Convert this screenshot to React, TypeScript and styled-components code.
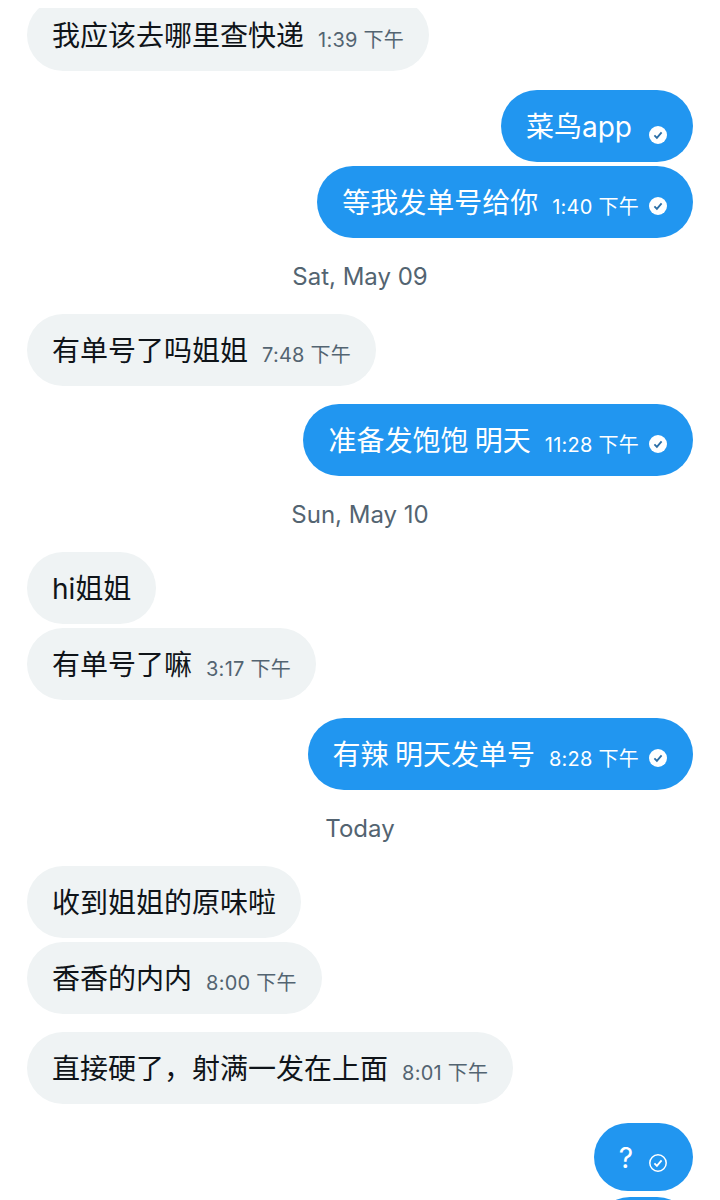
import React from "react";
import styled, { createGlobalStyle } from "styled-components";

const textStack = `Inter, "Noto Sans CJK SC", sans-serif`;

const Global = createGlobalStyle`
  html, body { margin: 0; padding: 0; background: #fff; }
  body { font-family: ${textStack}; }
`;

const Screen = styled.main`
  width: 720px;
  height: 1200px;
  overflow: hidden;
  box-sizing: border-box;
  padding: 8px 27px 0;
  background: #fff;
`;

/* The list is scrolled, so its first bubble runs under the top edge. */
const Viewport = styled.div`
  height: 1192px;
  overflow: hidden;
`;

const Thread = styled.div`
  display: flex;
  flex-direction: column;
  margin-top: -9px;
`;

const Bubble = styled.div<{ $mine?: boolean; $gap: number; $short?: boolean; $minWidth?: number }>`
  align-self: ${(p) => (p.$mine ? "flex-end" : "flex-start")};
  display: flex;
  align-items: flex-start;
  box-sizing: border-box;
  min-width: ${(p) => p.$minWidth ?? 0}px;
  height: ${(p) => (p.$short ? 68 : 72)}px;
  margin-top: ${(p) => p.$gap}px;
  padding: ${(p) => (p.$short ? 16 : 18)}px ${(p) => (p.$mine ? 26 : 25)}px 0 25px;
  border-radius: 36px;
  background: ${(p) => (p.$mine ? "#2196f0" : "#eff3f4")};
  color: ${(p) => (p.$mine ? "#ffffff" : "#0f1419")};
`;

const Body = styled.span`
  font-size: 28px;
  line-height: 38px;
  word-spacing: -1.5px;
  white-space: nowrap;
`;

const Stamp = styled.span<{ $mine?: boolean }>`
  margin: 11px 0 0 14px;
  font-size: 20px;
  line-height: 24px;
  letter-spacing: 0.25px;
  white-space: nowrap;
  color: ${(p) => (p.$mine ? "#ffffff" : "#536471")};
`;

const Receipt = styled.svg<{ $drop: number; $lead: number }>`
  flex: none;
  width: 18px;
  height: 18px;
  margin-left: ${(p) => p.$lead}px;
  margin-top: ${(p) => p.$drop}px;
`;

const DayLabel = styled.div<{ $gap: number }>`
  align-self: center;
  margin-top: ${(p) => p.$gap}px;
  height: 30px;
  line-height: 30px;
  font-size: 24px;
  color: #536471;
`;

const Sent = ({ drop, lead, filled = true }: { drop: number; lead: number; filled?: boolean }) => (
  <Receipt $drop={drop} $lead={lead} viewBox="0 0 18 18" aria-hidden="true">
    {filled ? (
      <circle cx="9" cy="9" r="9" fill="#fff" />
    ) : (
      <circle cx="9" cy="9" r="8.2" fill="none" stroke="#fff" strokeWidth="1.5" />
    )}
    <path
      d="M5.4 9.4 L7.9 11.9 L12.6 6.4"
      fill="none"
      stroke={filled ? "#2b6ea6" : "#fff"}
      strokeWidth="1.8"
    />
  </Receipt>
);

type Msg =
  | { kind: "day"; text: string; gap: number }
  | {
      kind: "msg";
      text: string;
      time?: string;
      mine?: boolean;
      gap: number;
      drop?: number;
      lead?: number;
      hollow?: boolean;
      short?: boolean;
    };

const thread: Msg[] = [
  { kind: "msg", text: "我应该去哪里查快递", time: "1:39 下午", gap: 0 },
  { kind: "msg", text: "菜鸟app", mine: true, gap: 19, drop: 18, lead: 17 },
  { kind: "msg", text: "等我发单号给你", time: "1:40 下午", mine: true, gap: 4 },
  { kind: "day", text: "Sat, May 09", gap: 24 },
  { kind: "msg", text: "有单号了吗姐姐", time: "7:48 下午", gap: 22 },
  { kind: "msg", text: "准备发饱饱 明天", time: "11:28 下午", mine: true, gap: 18 },
  { kind: "day", text: "Sun, May 10", gap: 24 },
  { kind: "msg", text: "hi姐姐", gap: 22 },
  { kind: "msg", text: "有单号了嘛", time: "3:17 下午", gap: 4 },
  { kind: "msg", text: "有辣 明天发单号", time: "8:28 下午", mine: true, gap: 18 },
  { kind: "day", text: "Today", gap: 24 },
  { kind: "msg", text: "收到姐姐的原味啦", gap: 22 },
  { kind: "msg", text: "香香的内内", time: "8:00 下午", gap: 4 },
  { kind: "msg", text: "直接硬了，射满一发在上面", time: "8:01 下午", gap: 18 },
  { kind: "msg", text: "?", mine: true, gap: 19, drop: 15, lead: 16, hollow: true, short: true },
];

export default function App() {
  return (
    <>
      <Global />
      <Screen>
        <Viewport>
          <Thread>
            {thread.map((m, i) =>
              m.kind === "day" ? (
                <DayLabel key={i} $gap={m.gap}>
                  {m.text}
                </DayLabel>
              ) : (
                <Bubble key={i} $mine={m.mine} $gap={m.gap} $short={m.short}>
                  <Body>{m.text}</Body>
                  {m.time && <Stamp $mine={m.mine}>{m.time}</Stamp>}
                  {m.mine && <Sent drop={m.drop ?? 13} lead={m.lead ?? 10} filled={!m.hollow} />}
                </Bubble>
              )
            )}
            {/* Next outgoing message, only its top edge is in view */}
            <Bubble $mine $gap={6} $minWidth={99} />
          </Thread>
        </Viewport>
      </Screen>
    </>
  );
}
